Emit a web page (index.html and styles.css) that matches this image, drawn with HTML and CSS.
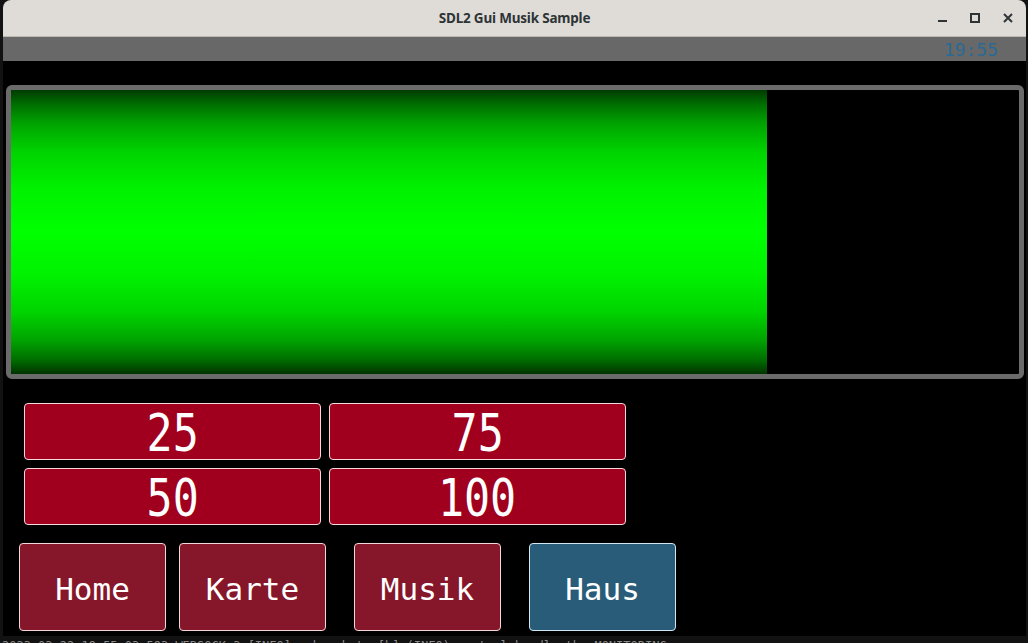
FILE: index.html
```html
<!DOCTYPE html>
<html>
<head>
<meta charset="utf-8">
<link rel="stylesheet" href="styles.css">
<title>SDL2 Gui Musik Sample</title>
</head>
<body>
<div class="desktop">
  <div class="window">
    <div class="titlebar">
      <div class="title">SDL2 Gui Musik Sample</div>
      <div class="controls">
        <svg class="ctl" width="12" height="12" viewBox="0 0 12 12"><rect x="2" y="8" width="9" height="2" fill="#2e3436"/></svg>
        <svg class="ctl" width="12" height="12" viewBox="0 0 12 12"><rect x="2" y="2" width="8" height="8" fill="none" stroke="#2e3436" stroke-width="2"/></svg>
        <svg class="ctl" width="12" height="12" viewBox="0 0 12 12"><path d="M2 2 L10 10 M10 2 L2 10" stroke="#2e3436" stroke-width="2" fill="none"/></svg>
      </div>
    </div>
    <div class="statusbar"><span class="clock">19:55</span></div>
    <div class="content">
      <div class="gauge">
        <div class="bar" style="width: 75%"></div>
      </div>
      <div class="values">
        <div class="val"><span class="txt">25</span></div>
        <div class="val"><span class="txt">75</span></div>
        <div class="val"><span class="txt">50</span></div>
        <div class="val"><span class="txt">100</span></div>
      </div>
      <div class="nav">
        <div class="navbtn home"><span class="ntxt">Home</span></div>
        <div class="navbtn karte"><span class="ntxt">Karte</span></div>
        <div class="navbtn musik"><span class="ntxt">Musik</span></div>
        <div class="navbtn haus active"><span class="ntxt">Haus</span></div>
      </div>
    </div>
  </div>
  <div class="terminal">2023-03-22 19:55:03.593 WEBSOCK-3 [INFO] websocket: [b] (INFO) control handle the MONITORING</div>
</div>
</body>
</html>
```
FILE: styles.css
```css
html, body {
  margin: 0;
  padding: 0;
  background: #121212;
  overflow: hidden;
}
.desktop {
  width: 1028px;
  height: 643px;
  overflow: hidden;
  background: #121212;
}
.window {
  margin-left: 3px;
  width: 1023px;
  height: 636px;
  background: #000;
  display: flex;
  flex-direction: column;
  border-radius: 8px 8px 0 0;
  overflow: hidden;
}
.titlebar {
  height: 36px;
  flex: none;
  background: #dfdcd8;
  border-bottom: 1px solid #bdb8b1;
  position: relative;
  display: flex;
  align-items: center;
  justify-content: center;
}
.title {
  font-family: "Noto Sans", "DejaVu Sans", sans-serif;
  font-weight: 700;
  font-size: 13.5px;
  color: #2e3436;
  letter-spacing: -0.2px;
}
.controls {
  position: absolute;
  right: 12px;
  top: 12px;
  display: flex;
  gap: 21px;
}
.ctl { display: block; }
.statusbar {
  height: 24px;
  flex: none;
  background: #686868;
  display: flex;
  justify-content: flex-end;
  align-items: center;
  padding-right: 28px;
}
.clock {
  font-family: "DejaVu Sans Mono", monospace;
  font-size: 18px;
  color: #2a6a94;
  line-height: 1;
  margin-top: 1px;
}
.content {
  flex: 1;
  display: flex;
  flex-direction: column;
}
.gauge {
  margin: 24px 2px 0 3px;
  height: 284px;
  border: 5px solid #6b6b6b;
  border-radius: 6px;
  background: #000;
  display: flex;
}
.bar {
  height: 100%;
  background: linear-gradient(to bottom,
    #003c00 0%, #006e00 5%, #00a400 12%, #00d400 22%, #00f200 35%, #00ff00 50%,
    #00f200 65%, #00d400 78%, #00a400 88%, #006e00 95%, #003400 100%);
}
.values {
  margin: 24px 0 0 21px;
  display: grid;
  grid-template-columns: 297px 297px;
  grid-auto-rows: 57px;
  gap: 8px;
}
.val {
  background: #a0001e;
  border: 1px solid #f4d8dc;
  border-radius: 4px;
  box-sizing: border-box;
  display: flex;
  align-items: center;
  justify-content: center;
}
.txt {
  font-family: "DejaVu Sans Mono", monospace;
  font-size: 51px;
  line-height: 1;
  color: #fff;
  transform: scaleX(0.85);
  margin-top: 4px;
}
.nav {
  margin: 18px 0 0 16px;
  display: flex;
}
.navbtn {
  width: 147px;
  height: 88px;
  box-sizing: border-box;
  background: #86162a;
  border: 1px solid #f3d6da;
  border-radius: 4px;
  display: flex;
  align-items: center;
  justify-content: center;
}
.karte { margin-left: 13px; }
.musik { margin-left: 28px; }
.haus { margin-left: 28px; }
.navbtn.active {
  background: #285c78;
  border-color: #cfe8f4;
}
.ntxt {
  font-family: "DejaVu Sans Mono", monospace;
  font-size: 31px;
  line-height: 1;
  color: #fff;
  margin-top: 4px;
}
.terminal {
  font-family: "DejaVu Sans Mono", monospace;
  font-size: 12px;
  color: #8a8a8a;
  white-space: nowrap;
  margin-top: 3px;
  padding-left: 2px;
  line-height: 14px;
}
```
